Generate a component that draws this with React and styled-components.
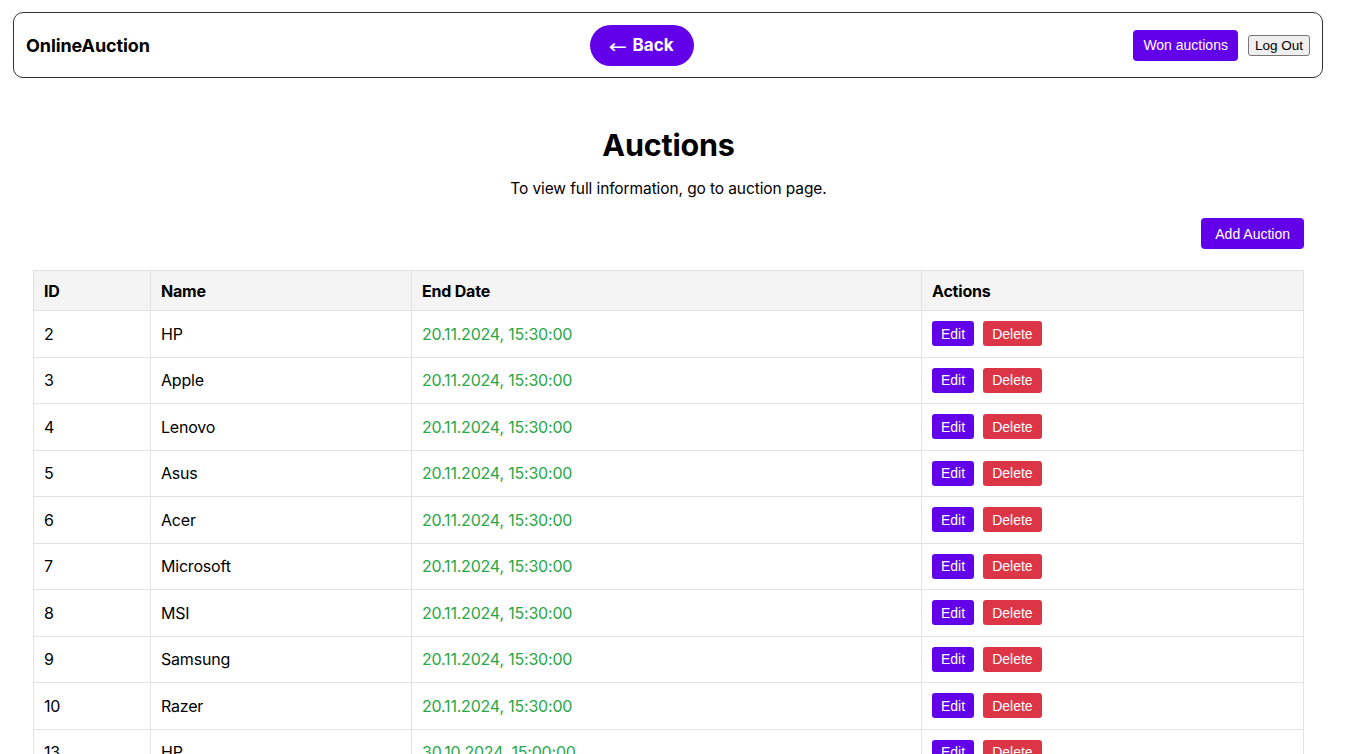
import React from 'react';
import styled, { createGlobalStyle } from 'styled-components';

const GlobalStyle = createGlobalStyle`
	html {
		overflow-y: scroll;
	}
	body {
		margin: 0;
		font-family: Inter, "Noto Sans", sans-serif;
		color: #000;
		background: #fff;
	}
`;

const auctions = [
	{ id: 2, name: 'HP', end: '20.11.2024, 15:30:00' },
	{ id: 3, name: 'Apple', end: '20.11.2024, 15:30:00' },
	{ id: 4, name: 'Lenovo', end: '20.11.2024, 15:30:00' },
	{ id: 5, name: 'Asus', end: '20.11.2024, 15:30:00' },
	{ id: 6, name: 'Acer', end: '20.11.2024, 15:30:00' },
	{ id: 7, name: 'Microsoft', end: '20.11.2024, 15:30:00' },
	{ id: 8, name: 'MSI', end: '20.11.2024, 15:30:00' },
	{ id: 9, name: 'Samsung', end: '20.11.2024, 15:30:00' },
	{ id: 10, name: 'Razer', end: '20.11.2024, 15:30:00' },
	{ id: 13, name: 'HP', end: '30.10.2024, 15:00:00' },
];

const App = () => {
	return (
		<>
			<GlobalStyle />
			<Page>
				<Header>
					<Logo>OnlineAuction</Logo>
					<BackButton><Arrow>←</Arrow>Back</BackButton>
					<HeaderRight>
						<PurpleButton $pad={10}>Won auctions</PurpleButton>
						<PlainButton>Log Out</PlainButton>
					</HeaderRight>
				</Header>
				<Main>
					<Title>Auctions</Title>
					<Subtitle>To view full information, go to auction page.</Subtitle>
					<Toolbar>
						<PurpleButton $pad={14}>Add Auction</PurpleButton>
					</Toolbar>
					<Table>
						<colgroup>
							<col style={{ width: 117 }} />
							<col style={{ width: 261 }} />
							<col style={{ width: 510 }} />
							<col />
						</colgroup>
						<thead>
							<tr>
								<Th>ID</Th>
								<Th>Name</Th>
								<Th>End Date</Th>
								<Th>Actions</Th>
							</tr>
						</thead>
						<tbody>
							{auctions.map(a => (
								<tr key={a.id}>
									<Td>{a.id}</Td>
									<Td>{a.name}</Td>
									<Td $green>{a.end}</Td>
									<Td>
										<Actions>
											<SmallButton>Edit</SmallButton>
											<SmallButton $danger>Delete</SmallButton>
										</Actions>
									</Td>
								</tr>
							))}
						</tbody>
					</Table>
				</Main>
			</Page>
		</>
	);
};

const Page = styled.div`
	box-sizing: border-box;
	width: 1335px;
	padding: 12px 12px 40px 13px;
`;

const Header = styled.header`
	display: flex;
	align-items: center;
	justify-content: space-between;
	height: 64px;
	padding: 0 12px;
	border: 1px solid #333;
	border-radius: 10px;
`;

const Logo = styled.div`
	font-size: 18px;
	font-weight: 700;
	letter-spacing: -0.1px;
`;

const BackButton = styled.button`
	display: flex;
	align-items: center;
	justify-content: center;
	gap: 7px;
	height: 41px;
	width: 104px;
	border: none;
	border-radius: 21px;
	background: #6200ea;
	color: #fff;
	font-family: Inter, sans-serif;
	font-size: 17px;
	font-weight: 700;
	cursor: pointer;
`;

const Arrow = styled.span`
	font-family: "DejaVu Sans", sans-serif;
	font-weight: 400;
	font-size: 19px;
	line-height: 1;
	transform: scaleX(1.15);
	margin-top: 2px;
`;

const HeaderRight = styled.div`
	display: flex;
	align-items: center;
	gap: 10px;
`;

const PurpleButton = styled.button`
	height: 31px;
	padding: 0 ${p => p.$pad || 12}px;
	border: none;
	border-radius: 4px;
	background: #6200ea;
	color: #fff;
	font-family: "Liberation Sans", Arial, sans-serif;
	font-size: 14px;
	cursor: pointer;
`;

const PlainButton = styled.button`
	height: 21px;
	padding: 0 6px;
	border: 1px solid #767676;
	border-radius: 3px;
	background: #efefef;
	color: #000;
	font-family: "Liberation Sans", Arial, sans-serif;
	font-size: 13.5px;
`;

const Main = styled.main`
	padding: 0 19px 0 20px;
	display: flex;
	flex-direction: column;
`;

const Title = styled.h1`
	margin: 48px 0 0;
	text-align: center;
	font-size: 30.5px;
	font-weight: 700;
	line-height: 38px;
	letter-spacing: -0.2px;
`;

const Subtitle = styled.p`
	margin: 14px 0 0;
	text-align: center;
	font-size: 15.5px;
	line-height: 22px;
	letter-spacing: -0.1px;
`;

const Toolbar = styled.div`
	display: flex;
	justify-content: flex-end;
	margin-top: 18px;
`;

const Table = styled.table`
	margin-top: 21px;
	width: 100%;
	border-collapse: collapse;
	table-layout: fixed;
`;

const Th = styled.th`
	text-align: left;
	background: #f4f4f4;
	border: 1px solid #e2e2e2;
	padding: 0 10px;
	height: 39px;
	font-size: 16px;
	font-weight: 700;
	letter-spacing: -0.2px;
`;

const Td = styled.td`
	border: 1px solid #e2e2e2;
	padding: 10px;
	height: 25.5px;
	font-size: 16px;
	letter-spacing: -0.2px;
	color: ${p => (p.$green ? '#28a745' : '#000')};
`;

const Actions = styled.div`
	display: flex;
	gap: 9px;
`;

const SmallButton = styled.button`
	height: 25px;
	padding: 0 9px;
	border: none;
	border-radius: 3px;
	background: ${p => (p.$danger ? '#dc3545' : '#6200ea')};
	color: #fff;
	font-family: "Liberation Sans", Arial, sans-serif;
	font-size: 14px;
	cursor: pointer;
`;

export default App;
